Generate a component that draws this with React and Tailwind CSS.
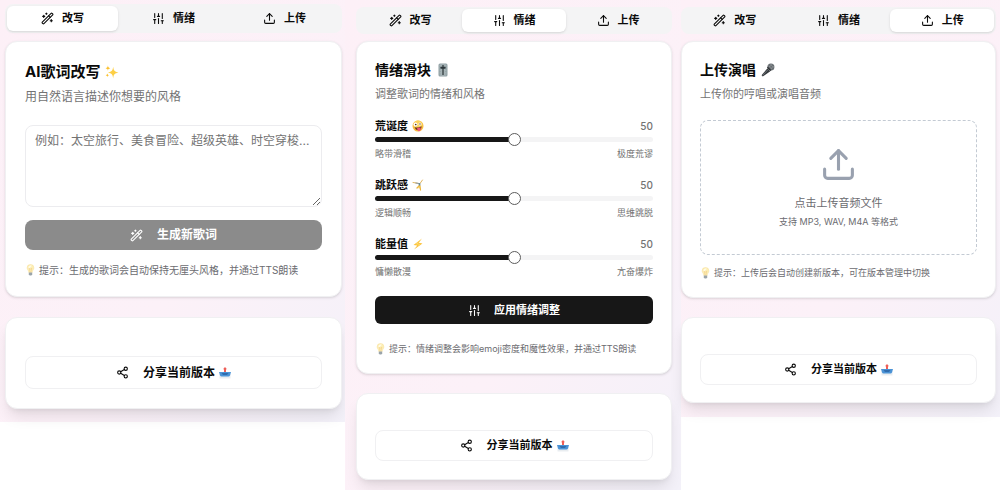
import { useState } from "react";
import { Share2, SlidersVertical, Upload, WandSparkles } from "lucide-react";

const TABS = [
    { id: "rewrite", label: "改写", icon: WandSparkles },
    { id: "mood", label: "情绪", icon: SlidersVertical },
    { id: "upload", label: "上传", icon: Upload },
];

const MOODS = [
    { id: "absurd", label: "荒诞度", emoji: ZanyIcon, low: "略带滑稽", high: "极度荒谬" },
    { id: "jump", label: "跳跃感", emoji: CartwheelIcon, low: "逻辑顺畅", high: "思维跳脱" },
    { id: "energy", label: "能量值", emoji: BoltIcon, low: "慵懒散漫", high: "亢奋爆炸" },
];

function SparklesIcon({ className }) {
    return (
        <svg viewBox="0 0 24 24" className={className} aria-hidden="true">
            <path fill="#fdcf45" d="M14 3c1 7 2 8 9 10-7 2-8 3-9 10-1-7-2-8-9-10 7-2 8-3 9-10z" />
            <path fill="#fbc02d" d="M5 1c.4 3 1 3.600 4 4.500-3 .9-3.600 1.500-4 4.500-.4-3-1-3.600-4-4.500 3-.9 3.600-1.500 4-4.500zM4 14c.3 2.200.8 2.700 3 3.500-2.200.8-2.700 1.300-3 3.500-.3-2.200-.8-2.700-3-3.500 2.200-.8 2.700-1.300 3-3.500z" />
        </svg>
    );
}

function LevelIcon({ className }) {
    return (
        <svg viewBox="0 0 20 28" className={className} aria-hidden="true">
            <rect x="1" y="1" width="18" height="26" rx="3" fill="#8f9fa3" />
            <rect x="3" y="2.500" width="14" height="23" rx="2" fill="#a5b3b6" />
            <path stroke="#8a989c" d="M3 7h3M3 12h3M3 17h3M3 22h3M14 7h3M14 12h3M14 17h3M14 22h3" />
            <path stroke="#2d373b" strokeWidth="2.500" d="M10 4v20" />
            <rect x="5" y="7.500" width="10" height="4" rx="1" fill="#2d373b" />
        </svg>
    );
}

function ZanyIcon({ className }) {
    return (
        <svg viewBox="0 0 24 24" className={className} aria-hidden="true">
            <circle cx="12" cy="12" r="11" fill="#f9b93c" />
            <circle cx="12" cy="10" r="9" fill="#fdd35a" />
            <path fill="#6b3516" d="M5 14c5 2 10 1 14-2 .6 5-2 8.500-6 8.500-4 0-7-2.500-8-6.500z" />
            <path fill="#f0567b" d="M10 16.500c2-1.200 5-1.800 7-1.500 1 3 .5 6.500-2 7.200-3 .8-4.500-2.700-5-5.700z" />
            <circle cx="7" cy="9" r="4" fill="#fff" />
            <circle cx="16" cy="8" r="3" fill="#fff" />
            <circle cx="7.500" cy="9" r="1.700" fill="#5a3418" />
            <circle cx="16" cy="8" r="1.300" fill="#5a3418" />
        </svg>
    );
}

function CartwheelIcon({ className }) {
    return (
        <svg viewBox="0 0 24 24" className={className} fill="none" strokeLinecap="round" strokeLinejoin="round" aria-hidden="true">
            <path stroke="#e0b560" strokeWidth="2" d="M2 7l9 1.500M21 2l-5 7" />
            <path stroke="#8c979b" strokeWidth="2.500" d="M8 8l6 1" />
            <path stroke="#668b96" strokeWidth="3.500" d="M15 9.500v3" />
            <path stroke="#edb63a" strokeWidth="2.500" d="M14 14l-4 4M16 14l1 8" />
            <circle cx="14.500" cy="17" r="2" fill="#f6ca58" />
        </svg>
    );
}

function BoltIcon({ className }) {
    return (
        <svg viewBox="0 0 24 24" className={className} aria-hidden="true">
            <path fill="#fbc138" d="M20 1L3 14l7.500 1L4 23l17-12-7.500-1.500z" />
            <path fill="#fddd76" d="M17 4L7 12.500l7 .5-4 5 7-6-6-1z" />
        </svg>
    );
}

function BulbIcon({ className }) {
    return (
        <svg viewBox="0 0 20 28" className={className} aria-hidden="true">
            <path fill="#fdeeb5" stroke="#f5dc92" d="M10 1a8 8 0 0 0-8 8c0 4 4 6 4 11h8c0-5 4-7 4-11a8 8 0 0 0-8-8z" />
            <path fill="#fffbe6" d="M6 5c2-2 5-2 7-1l-6 7c-2-1-2-4-1-6z" />
            <path fill="none" stroke="#edc274" d="M7 10l2 9M13 10l-2 9M7 10l3 2 3-2" />
            <path fill="#9aa4aa" d="M6 20h8v4l-2 3H8l-2-3z" />
        </svg>
    );
}

function MicIcon({ className }) {
    return (
        <svg viewBox="0 0 24 24" className={className} aria-hidden="true">
            <path fill="#35393d" d="M11 9l5 5L3 23l-2-2z" />
            <path stroke="#8c9297" d="M11.500 12L3 21" />
            <circle cx="17" cy="7" r="6" fill="#666c70" />
            <path fill="none" stroke="#a2a7aa" strokeWidth=".8" d="M13 4l7 7M16 2l6 6M13 8l6-6M16 11l6-6" />
            <path stroke="#25282b" strokeWidth="2" d="M11 7l6 6" />
        </svg>
    );
}

function OutboxIcon({ className }) {
    return (
        <svg viewBox="0 0 24 24" className={className} aria-hidden="true">
            <path fill="#e9edf0" d="M1 14h22v9H1z" />
            <path fill="#4b93d6" d="M0 10h24l-2 7q-1 2-3 2H5q-2 0-3-2z" />
            <path fill="#2f6cae" d="M5 12h14l-3 4H8z" />
            <path fill="#ee5f58" d="M12 0l4 4.500h-2V10h-4V4.500H8z" />
        </svg>
    );
}

function Tabs({ active, className }) {
    const [current, setCurrent] = useState(active);

    return (
        <div role="tablist" className={`grid grid-cols-3 rounded-lg bg-[#f4f4f5] p-[2px] ${className}`}>
            {TABS.map(({ id, label, icon: Icon }) => (
                <button
                    key={id}
                    type="button"
                    role="tab"
                    aria-selected={current === id}
                    onClick={() => setCurrent(id)}
                    className={`flex items-center justify-center gap-2 rounded-md text-[11px] font-semibold ${current === id ? "bg-white shadow-sm" : ""}`}
                >
                    <Icon className="size-[13px]" />
                    {label}
                </button>
            ))}
        </div>
    );
}

function Card({ className, children }) {
    return (
        <section className={`flex flex-col rounded-xl border border-[#f0f0f2] bg-white ${className}`}>
            {children}
        </section>
    );
}

function CardHeader({ title, emoji, description, className, titleClass, textClass }) {
    return (
        <header className={`flex flex-col ${className}`}>
            <h2 className={`flex items-center gap-[5px] leading-5 font-bold ${titleClass}`}>
                {title}
                {emoji}
            </h2>
            <p className={`leading-4 text-[#737373] ${textClass}`}>{description}</p>
        </header>
    );
}

function Hint({ className, children }) {
    return (
        <p className={`flex items-center gap-1 whitespace-nowrap text-[#6b6b70] ${className}`}>
            <BulbIcon className="ml-px h-3 w-[9px] shrink-0" />
            {children}
        </p>
    );
}

function ShareButton({ className }) {
    return (
        <button
            type="button"
            className={`flex w-full items-center justify-center rounded-lg border border-[#f0f0f2] bg-white font-semibold ${className}`}
        >
            <Share2 className="mr-[14px] size-[13px]" />
            分享当前版本
            <OutboxIcon className="ml-1 size-3" />
        </button>
    );
}

function MoodSlider({ mood }) {
    const [value, setValue] = useState(50);
    const Emoji = mood.emoji;

    return (
        <div>
            <div className="flex items-center justify-between leading-4">
                <label htmlFor={mood.id} className="flex items-center gap-1 text-[11px] font-semibold">
                    {mood.label}
                    <Emoji className="size-3" />
                </label>
                <span className="text-[10px] font-medium text-[#737373]">{value}</span>
            </div>
            <input
                id={mood.id}
                type="range"
                min="0"
                max="100"
                value={value}
                onChange={(e) => setValue(Number(e.target.value))}
                style={{ backgroundImage: `linear-gradient(to right, #171717 ${value}%, #f4f4f5 ${value}%)` }}
                className="mt-[3px] block h-[5px] w-full appearance-none rounded-full [&::-webkit-slider-thumb]:size-[13px] [&::-webkit-slider-thumb]:appearance-none [&::-webkit-slider-thumb]:rounded-full [&::-webkit-slider-thumb]:border [&::-webkit-slider-thumb]:border-[#5c5c5c] [&::-webkit-slider-thumb]:bg-white"
            />
            <div className="mt-[6px] flex justify-between text-[9px] leading-3 text-[#737373]">
                <span>{mood.low}</span>
                <span>{mood.high}</span>
            </div>
        </div>
    );
}

function RewritePanel() {
    const [prompt, setPrompt] = useState("");

    return (
        <div className="bg-linear-to-br from-[#fdf0f7] via-[#fcf1f8] via-60% to-[#f3f1f9] pt-1 pr-[3px] pb-[13px] pl-[5px]">
            <Tabs active="rewrite" className="h-[29px]" />
            <Card className="mt-2 px-[19px] pt-5 pb-[18px] shadow-sm">
                <CardHeader
                    title="AI歌词改写"
                    emoji={<SparklesIcon className="size-[14px]" />}
                    description="用自然语言描述你想要的风格"
                    className="gap-[7px]"
                    titleClass="text-[15px]"
                    textClass="text-[12px]"
                />
                <textarea
                    aria-label="歌词风格"
                    rows={4}
                    value={prompt}
                    onChange={(e) => setPrompt(e.target.value)}
                    placeholder="例如：太空旅行、美食冒险、超级英雄、时空穿梭..."
                    className="mt-5 block rounded-lg border border-[#ececef] px-[9px] py-[6px] text-[12px] leading-[17px] placeholder:text-[#737373]"
                />
                <button
                    type="button"
                    className="mt-[13px] flex h-[30px] items-center justify-center gap-[14px] rounded-lg bg-[#8b8b8b] text-[12px] font-semibold text-white"
                >
                    <WandSparkles className="size-[13px]" />
                    生成新歌词
                </button>
                <Hint className="mt-3 text-[10px] leading-4">提示：生成的歌词会自动保持无厘头风格，并通过TTS朗读</Hint>
            </Card>
            <Card className="mt-5 px-[19px] pt-[38px] pb-[19px] shadow-lg">
                <ShareButton className="h-[33px] text-[12px]" />
            </Card>
        </div>
    );
}

function MoodPanel() {
    return (
        <div className="bg-linear-to-br from-[#fdf0f7] via-[#fcf1f8] via-60% to-[#f3f1f9] pt-[7px] pr-[9px] pb-[10px] pl-[11px]">
            <Tabs active="mood" className="h-[27px]" />
            <Card className="mt-[7px] px-[18px] pt-[18px] pb-[17px] shadow-sm">
                <CardHeader
                    title="情绪滑块"
                    emoji={<LevelIcon className="ml-[2px] h-[14px] w-[10px]" />}
                    description="调整歌词的情绪和风格"
                    className="gap-[6px]"
                    titleClass="text-[14px]"
                    textClass="text-[11px]"
                />
                <div className="mt-4 flex flex-col gap-[17px]">
                    {MOODS.map((mood) => (
                        <MoodSlider key={mood.id} mood={mood} />
                    ))}
                </div>
                <button
                    type="button"
                    className="mt-[18px] flex h-7 items-center justify-center gap-[13px] rounded-md bg-[#171717] text-[11px] font-semibold text-white"
                >
                    <SlidersVertical className="size-[13px]" />
                    应用情绪调整
                </button>
                <Hint className="mt-[18px] text-[9px] leading-[14px]">提示：情绪调整会影响emoji密度和魔性效果，并通过TTS朗读</Hint>
            </Card>
            <Card className="mt-[19px] px-[18px] pt-9 pb-[18px] shadow-lg">
                <ShareButton className="h-[31px] text-[11px]" />
            </Card>
        </div>
    );
}

function UploadPanel() {
    return (
        <div className="bg-linear-to-br from-[#fdf0f7] via-[#fcf1f8] via-60% to-[#f3f1f9] pt-[7px] pr-1 pb-[14px]">
            <Tabs active="upload" className="h-[27px]" />
            <Card className="mt-[7px] px-[18px] pt-[18px] pb-[17px] shadow-sm">
                <CardHeader
                    title="上传演唱"
                    emoji={<MicIcon className="size-[14px]" />}
                    description="上传你的哼唱或演唱音频"
                    className="gap-[6px]"
                    titleClass="text-[14px]"
                    textClass="text-[11px]"
                />
                <label className="mt-[18px] flex cursor-pointer flex-col items-center rounded-lg border border-dashed border-[#c3cad3] py-[25px] text-[#6b6b70]">
                    <Upload className="size-[37px] text-[#99a1af]" />
                    <span className="mt-3 text-[11px] leading-4">点击上传音频文件</span>
                    <span className="mt-1 text-[9px] leading-[14px]">支持 MP3, WAV, M4A 等格式</span>
                    <input type="file" accept="audio/*" className="sr-only" />
                </label>
                <Hint className="mt-[11px] text-[9px] leading-[14px]">提示：上传后会自动创建新版本，可在版本管理中切换</Hint>
            </Card>
            <Card className="mt-[19px] px-[18px] pt-9 pb-[17px] shadow-lg">
                <ShareButton className="h-[31px] text-[11px]" />
            </Card>
        </div>
    );
}

export default function App() {
    return (
        <main className="grid grid-cols-[345fr_336fr_319fr] items-start bg-white font-['Inter','Noto_Sans_CJK_SC',sans-serif] text-[#0a0a0a]">
            <RewritePanel />
            <MoodPanel />
            <UploadPanel />
        </main>
    );
}
